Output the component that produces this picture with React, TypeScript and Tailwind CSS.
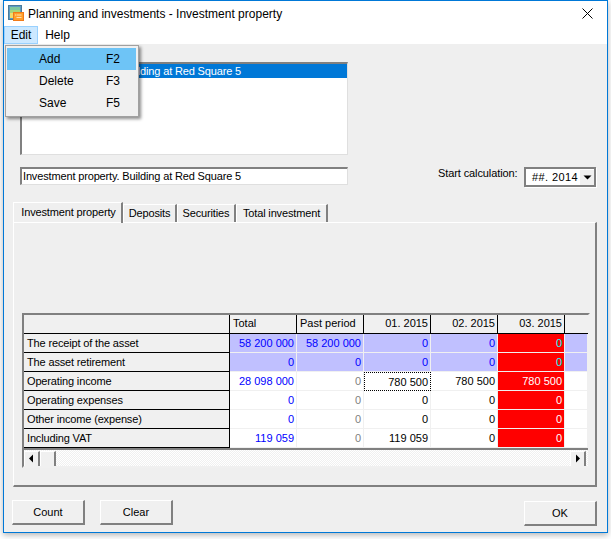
const font = "font-['Liberation_Sans',Arial,sans-serif]";

type Cell = { text: string; color?: string; bg?: string; focus?: boolean };

const white: Cell = { text: "" };

const rows: { label: string; cells: Cell[] }[] = [
  {
    label: "The receipt of the asset",
    cells: [
      { text: "58 200 000", color: "text-[#0000ff]", bg: "bg-[#c0c0ff]" },
      { text: "58 200 000", color: "text-[#0000ff]", bg: "bg-[#c0c0ff]" },
      { text: "0", color: "text-[#0000ff]", bg: "bg-[#c0c0ff]" },
      { text: "0", color: "text-[#0000ff]", bg: "bg-[#c0c0ff]" },
      { text: "0", color: "text-[#00ffff]", bg: "bg-[#ff0000]" },
      { text: "", bg: "bg-[#c0c0ff]" },
    ],
  },
  {
    label: "The asset retirement",
    cells: [
      { text: "0", color: "text-[#0000ff]", bg: "bg-[#c0c0ff]" },
      { text: "0", color: "text-[#0000ff]", bg: "bg-[#c0c0ff]" },
      { text: "0", color: "text-[#0000ff]", bg: "bg-[#c0c0ff]" },
      { text: "0", color: "text-[#0000ff]", bg: "bg-[#c0c0ff]" },
      { text: "0", color: "text-[#00ffff]", bg: "bg-[#ff0000]" },
      { text: "", bg: "bg-[#c0c0ff]" },
    ],
  },
  {
    label: "Operating income",
    cells: [
      { text: "28 098 000", color: "text-[#0000ff]" },
      { text: "0", color: "text-[#808080]" },
      { text: "780 500", focus: true },
      { text: "780 500" },
      { text: "780 500", color: "text-white", bg: "bg-[#ff0000]" },
      white,
    ],
  },
  {
    label: "Operating expenses",
    cells: [
      { text: "0", color: "text-[#0000ff]" },
      { text: "0", color: "text-[#808080]" },
      { text: "0" },
      { text: "0" },
      { text: "0", color: "text-white", bg: "bg-[#ff0000]" },
      white,
    ],
  },
  {
    label: "Other income (expense)",
    cells: [
      { text: "0", color: "text-[#0000ff]" },
      { text: "0", color: "text-[#808080]" },
      { text: "0" },
      { text: "0" },
      { text: "0", color: "text-white", bg: "bg-[#ff0000]" },
      white,
    ],
  },
  {
    label: "Including VAT",
    cells: [
      { text: "119 059", color: "text-[#0000ff]" },
      { text: "0", color: "text-[#808080]" },
      { text: "119 059" },
      { text: "0" },
      { text: "0", color: "text-white", bg: "bg-[#ff0000]" },
      white,
    ],
  },
];

const AppIcon = () => (
  <svg width="16" height="17" viewBox="0 0 16 17">
    <rect x="0.5" y="0.5" width="13" height="14" fill="#5b9bc4" stroke="#4a7a9a" />
    <rect x="2" y="2" width="10" height="3" fill="#7fc8a0" />
    <rect x="2" y="5" width="10" height="3" fill="#a8d67a" />
    <rect x="2" y="8" width="10" height="5" fill="#f3dc6a" />
    <rect x="5.5" y="7.5" width="10" height="8" fill="#ff9f2a" stroke="#f07a1a" />
    <path d="M8.5 10h5M8.5 12.5h5" stroke="#ffe3b0" />
    <rect x="7" y="9.5" width="1" height="1" fill="#ffe3b0" />
  </svg>
);

const Arrow = ({ dir }: { dir: "left" | "right" | "down" }) => (
  <svg width="9" height="9" viewBox="0 0 9 9">
    {dir === "left" && <path d="M6 0.5v8L2 4.5z" fill="#000" />}
    {dir === "right" && <path d="M3 0.5v8l4-4z" fill="#000" />}
    {dir === "down" && <path d="M0.5 2.5h8l-4 4z" fill="#000" />}
  </svg>
);

const Button = ({ label }: { label: string }) => (
  <button className="w-[73px] h-[25px] bg-[#f0f0f0] border-t border-l border-t-white border-l-white border-r-2 border-b-2 border-r-[#808080] border-b-[#808080] text-[11px] text-black">
    {label}
  </button>
);

const Tab = ({ label, w, active }: { label: string; w: string; active?: boolean }) => (
  <div
    className={`${w} flex items-center justify-center border-t border-l border-t-white border-l-white border-r-2 border-r-[#808080] text-[11px] tracking-[-0.15px] text-black ${
      active ? "h-[21px] pb-[1px] pl-[2px] relative top-[1px]" : "h-[18px]"
    }`}
  >
    {label}
  </div>
);

const ScrollBtn = ({ dir }: { dir: "left" | "right" }) => (
  <div className="w-[16px] h-[17px] flex items-center justify-center bg-[#f0f0f0] border-t border-l border-t-white border-l-white border-r-2 border-b-2 border-r-[#808080] border-b-[#808080]">
    <Arrow dir={dir} />
  </div>
);

export default function App() {
  return (
    <div className={`relative w-[611px] h-[539px] bg-white overflow-hidden text-black ${font}`}>
      <div className="ml-[3px] w-[605px] h-[533px] flex flex-col border border-[#0078d7] shadow-[0_2px_6px_rgba(0,0,0,0.3)]">
        {/* title bar */}
        <div className="h-[25px] shrink-0 flex items-center bg-white pl-[4px] pr-[14px]">
          <AppIcon />
          <span className="ml-[4px] text-[12px]">Planning and investments - Investment property</span>
          <svg className="ml-auto" width="11" height="11" viewBox="0 0 11 11">
            <path d="M0.5 0.5l10 10M10.5 0.5l-10 10" stroke="#000" fill="none" />
          </svg>
        </div>

        {/* menu bar */}
        <div className="h-[18px] shrink-0 flex items-stretch bg-white text-[12px]">
          <div className="w-[34px] flex items-center justify-center bg-[#cce8ff] border border-[#99d1ff]">Edit</div>
          <div className="w-[39px] flex items-center justify-center">Help</div>
        </div>

        <div className="flex-1 flex flex-col bg-[#efefef]">
          {/* list */}
          <div className="ml-[16px] mt-[18px] w-[328px] h-[93px] bg-white border-t-2 border-l-2 border-t-[#808080] border-l-[#808080] border-r border-b border-r-[#dfdfdf] border-b-[#dfdfdf]">
            <div className="h-[14px] bg-[#0078d7] text-white text-[11px] tracking-[-0.15px] leading-[14px] pl-[1px] whitespace-nowrap">
              Investment property. Building at Red Square 5
            </div>
          </div>

          {/* name + start date */}
          <div className="flex items-start mt-[12px] ml-[16px] h-[19px]">
            <div className="w-[328px] h-[18px] bg-white border-t-2 border-l-2 border-t-[#808080] border-l-[#808080] border-r border-b border-r-[#dfdfdf] border-b-[#dfdfdf] text-[11px] tracking-[-0.15px] leading-[15px] pl-[1px]">
              Investment property. Building at Red Square 5
            </div>
            <span className="ml-[90px] w-[78px] whitespace-nowrap text-[11px] tracking-[-0.1px] leading-[13px]">
              Start calculation:
            </span>
            <div className="ml-[8px] w-[72px] h-[20px] flex items-stretch bg-white border-2 border-[#808080] shadow-[1px_1px_0_#ffffff] text-[11px]">
              <span className="flex-1 pl-[6px] leading-[17px] tracking-[0.4px] whitespace-nowrap">##. 2014</span>
              <div className="w-[15px] flex items-center justify-center bg-[#f0f0f0] border-l border-t border-l-white border-t-white">
                <Arrow dir="down" />
              </div>
            </div>
          </div>

          {/* tabs */}
          <div className="flex items-end mt-[15px] ml-[9px] h-[21px]">
            <Tab label="Investment property" w="w-[110px]" active />
            <Tab label="Deposits" w="w-[54px]" />
            <Tab label="Securities" w="w-[59px]" />
            <Tab label="Total investment" w="w-[92px]" />
          </div>

          {/* tab panel */}
          <div className="ml-[9px] w-[584px] h-[265px] flex flex-col border-t border-l border-t-white border-l-white border-r-2 border-b-2 border-r-[#808080] border-b-[#808080] pl-[8px] pt-[90px]">
            <div className="w-[568px] h-[155px] flex flex-col border-2 border-[#808080] border-r-[#f0f0f0] border-b-[#f0f0f0] bg-white overflow-hidden">
              <div className="grid grid-cols-[206px_67px_67px_67px_67px_67px_23px] auto-rows-[19px] text-[11px] leading-[18px]">
                <div className="bg-[#f0f0f0] border-r border-b border-black" />
                <div className="bg-[#f0f0f0] border-r border-b border-black pl-[3px] leading-[17px]">Total</div>
                <div className="bg-[#f0f0f0] border-r border-b border-black pl-[3px] leading-[17px]">Past period</div>
                <div className="bg-[#f0f0f0] border-r border-b border-black pr-[2px] text-right leading-[17px]">01. 2015</div>
                <div className="bg-[#f0f0f0] border-r border-b border-black pr-[2px] text-right leading-[17px]">02. 2015</div>
                <div className="bg-[#f0f0f0] border-r border-b border-black pr-[2px] text-right leading-[17px]">03. 2015</div>
                <div className="bg-[#f0f0f0] border-b border-black" />
                {rows.map((row) => (
                  <div key={row.label} className="contents">
                    <div className="bg-[#f0f0f0] border-r border-b border-black pl-[3px] tracking-[-0.15px] whitespace-nowrap">
                      {row.label}
                    </div>
                    {row.cells.map((cell, i) => (
                      <div
                        key={i}
                        className={`border-r border-b border-[#f0f0f0] pr-[2px] text-right whitespace-nowrap ${cell.bg ?? "bg-white"} ${cell.color ?? "text-black"} ${
                          cell.focus ? "border border-dotted border-black" : ""
                        }`}
                      >
                        {cell.text}
                      </div>
                    ))}
                  </div>
                ))}
              </div>
              <div className="h-[2px] shrink-0 bg-[#808080]" />
              <div className="h-[18px] shrink-0 flex items-center bg-[repeating-conic-gradient(#f0f0f0_0_25%,#ffffff_0_50%)] bg-[length:2px_2px]">
                <ScrollBtn dir="left" />
                <div className="w-[16px] h-[17px] bg-[#f0f0f0] border-t border-l border-t-white border-l-white border-r-2 border-b-2 border-r-[#808080] border-b-[#808080]" />
                <div className="flex-1" />
                <ScrollBtn dir="right" />
                <div className="w-[2px]" />
              </div>
            </div>
          </div>

          {/* buttons */}
          <div className="flex mt-[13px] ml-[8px] w-[585px] gap-[15px]">
            <Button label="Count" />
            <Button label="Clear" />
            <div className="ml-auto">
              <Button label="OK" />
            </div>
          </div>
        </div>
      </div>

      {/* open Edit menu */}
      <div className="absolute left-[5px] top-[45px] w-[134px] h-[72px] bg-[#f0f0f0] border border-[#a0a0a0] shadow-[2px_2px_3px_rgba(0,0,0,0.45)] pt-[2px] pl-[1px] text-[12px]">
        <div className="w-[129px] h-[22px] flex items-center bg-[#6ec4f6] pl-[32px]">
          <span className="w-[67px]">Add</span>
          <span>F2</span>
        </div>
        <div className="w-[129px] h-[22px] flex items-center pl-[32px]">
          <span className="w-[67px]">Delete</span>
          <span>F3</span>
        </div>
        <div className="w-[129px] h-[22px] flex items-center pl-[32px]">
          <span className="w-[67px]">Save</span>
          <span>F5</span>
        </div>
      </div>
    </div>
  );
}
